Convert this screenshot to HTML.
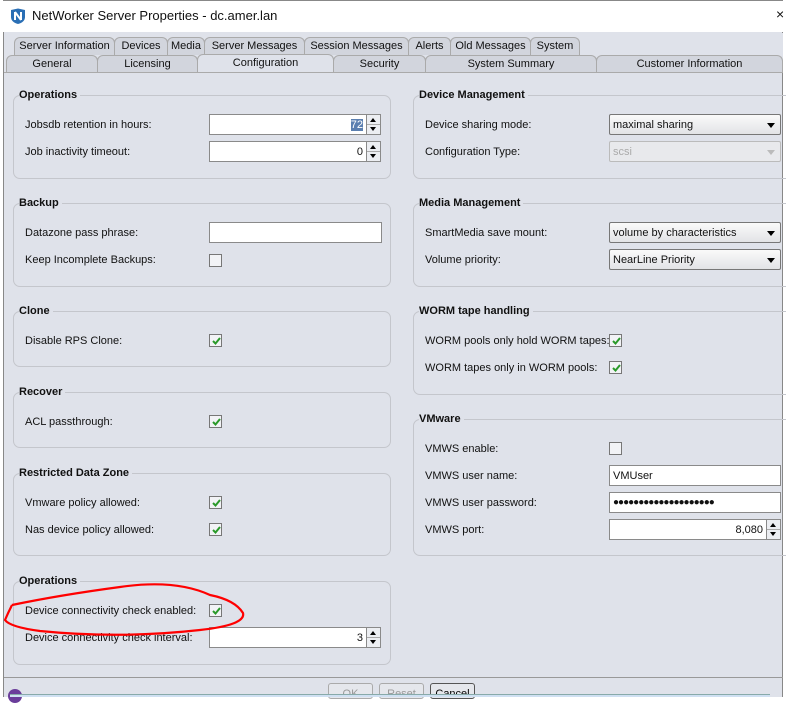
<!DOCTYPE html>
<html><head><meta charset="utf-8"><style>
*{box-sizing:border-box;margin:0;padding:0}
body{width:786px;height:697px;overflow:hidden;background:#fff;font-family:"Liberation Sans",sans-serif;font-size:11px;color:#111;position:relative}
.a{position:absolute}
.win{left:3px;top:0;width:780px;height:697px;background:#dfe2ea;border-left:1px solid #888;border-right:1px solid #888}
.title{left:3px;top:0;width:780px;height:32px;background:#fff;border-top:1px solid #888}
.tab{position:absolute;height:18px;background:#d2d5dd;border:1px solid #aaa;border-bottom:none;border-radius:6px 6px 0 0;text-align:center;line-height:17px;font-size:11px}
.grp{position:absolute;border:1px solid #c4c6cc;border-radius:7px}
.gt{position:absolute;font-weight:bold;font-size:11px;background:#dfe2ea;padding-right:3px}
.lbl{position:absolute;font-size:11px}
.in{position:absolute;height:21px;background:#fff;border:1px solid #8a8a8a;text-align:right;padding-right:3px;line-height:20px}
.sp{position:absolute;width:15px;height:21px;border:1px solid #8a8a8a;background:#eceef2}
.sp:before{content:"";position:absolute;left:3px;top:3px;border:3.5px solid transparent;border-bottom:4px solid #000;border-top:none}
.sp:after{content:"";position:absolute;left:3px;top:12px;border:3.5px solid transparent;border-top:4px solid #000;border-bottom:none}
.sp i{position:absolute;left:0;right:0;top:9px;border-top:1px solid #aaa}
.cb{position:absolute;width:13px;height:13px;border:1px solid #777;background:#f2f3f6}
.ck svg{position:absolute;left:2px;top:2px}
.dd{position:absolute;height:21px;border:1px solid #777;border-radius:2px;background:linear-gradient(#fafafa,#e2e3e6);padding-left:3px;line-height:20px}
.dd:after{content:"";position:absolute;right:5px;top:8px;border:4.5px solid transparent;border-top:5px solid #000;border-bottom:none}
.dis{color:#aaa;border-color:#bbb;background:#e8e9ec}
.dis:after{border-top-color:#bbb}
.btn{position:absolute;top:683px;height:16px;border:1px solid #aaa;border-radius:3px;background:#e5e7ec;text-align:center;color:#999;line-height:20px}
</style></head><body>
<div class="a" style="left:0;top:0;width:3px;height:697px;background:#fff"></div>
<div class="a win"></div>
<div class="a title"></div>
<svg class="a" style="left:10px;top:8px" width="16" height="16" viewBox="0 0 16 16"><path d="M1 2 L8 0.5 L15 2 L15 9 Q15 14 8 16 Q1 14 1 9Z" fill="#2a6fb5"/><path d="M5 4v8M5 4l6 8M11 4v8" stroke="#fff" stroke-width="2" fill="none"/></svg>
<div class="a" style="left:32px;top:8px;font-size:13px">NetWorker Server Properties - dc.amer.lan</div>
<div class="a" style="left:776px;top:6px;font-size:14px">×</div>
<div class="a" style="left:4px;top:33px;width:779px;height:40px;background:#dfe2ea"></div>
<div class="tab" style="left:14px;top:37px;width:101px">Server Information</div>
<div class="tab" style="left:114px;top:37px;width:54px">Devices</div>
<div class="tab" style="left:167px;top:37px;width:38px">Media</div>
<div class="tab" style="left:204px;top:37px;width:101px">Server Messages</div>
<div class="tab" style="left:304px;top:37px;width:105px">Session Messages</div>
<div class="tab" style="left:408px;top:37px;width:43px">Alerts</div>
<div class="tab" style="left:450px;top:37px;width:81px">Old Messages</div>
<div class="tab" style="left:530px;top:37px;width:50px">System</div>
<div class="tab" style="left:6px;top:55px;width:92px">General</div>
<div class="tab" style="left:97px;top:55px;width:101px">Licensing</div>
<div class="tab" style="left:197px;top:54px;width:137px;height:19px;background:#dfe2ea">Configuration</div>
<div class="tab" style="left:333px;top:55px;width:93px">Security</div>
<div class="tab" style="left:425px;top:55px;width:172px">System Summary</div>
<div class="tab" style="left:596px;top:55px;width:187px">Customer Information</div>
<div class="a" style="left:4px;top:72px;width:779px;border-top:1px solid #aaa"></div>

<!-- left column -->
<div class="grp" style="left:13px;top:95px;width:378px;height:84px"></div><div class="gt" style="left:19px;top:89px">Operations</div>
<div class="lbl" style="left:25px;top:119px">Jobsdb retention in hours:</div>
<div class="in" style="left:209px;top:114px;width:158px"><span style="background:#5b7fb0;color:#fff">72</span></div><div class="sp" style="left:366px;top:114px"><i></i></div>
<div class="lbl" style="left:25px;top:146px">Job inactivity timeout:</div>
<div class="in" style="left:209px;top:141px;width:158px">0</div><div class="sp" style="left:366px;top:141px"><i></i></div>

<div class="grp" style="left:13px;top:203px;width:378px;height:84px"></div><div class="gt" style="left:19px;top:197px">Backup</div>
<div class="lbl" style="left:25px;top:227px">Datazone pass phrase:</div>
<div class="in" style="left:209px;top:222px;width:173px"></div>
<div class="lbl" style="left:25px;top:254px">Keep Incomplete Backups:</div>
<div class="cb" style="left:209px;top:254px"></div>

<div class="grp" style="left:13px;top:311px;width:378px;height:56px"></div><div class="gt" style="left:19px;top:305px">Clone</div>
<div class="lbl" style="left:25px;top:335px">Disable RPS Clone:</div>
<div class="cb ck" style="left:209px;top:334px"><svg width="9" height="8" viewBox="0 0 9 8"><path d="M1 4l2.5 2.5L8 1" stroke="#2a9a2a" stroke-width="2" fill="none"/></svg></div>

<div class="grp" style="left:13px;top:392px;width:378px;height:56px"></div><div class="gt" style="left:19px;top:386px">Recover</div>
<div class="lbl" style="left:25px;top:416px">ACL passthrough:</div>
<div class="cb ck" style="left:209px;top:415px"><svg width="9" height="8" viewBox="0 0 9 8"><path d="M1 4l2.5 2.5L8 1" stroke="#2a9a2a" stroke-width="2" fill="none"/></svg></div>

<div class="grp" style="left:13px;top:473px;width:378px;height:83px"></div><div class="gt" style="left:19px;top:467px">Restricted Data Zone</div>
<div class="lbl" style="left:25px;top:497px">Vmware policy allowed:</div>
<div class="cb ck" style="left:209px;top:496px"><svg width="9" height="8" viewBox="0 0 9 8"><path d="M1 4l2.5 2.5L8 1" stroke="#2a9a2a" stroke-width="2" fill="none"/></svg></div>
<div class="lbl" style="left:25px;top:524px">Nas device policy allowed:</div>
<div class="cb ck" style="left:209px;top:523px"><svg width="9" height="8" viewBox="0 0 9 8"><path d="M1 4l2.5 2.5L8 1" stroke="#2a9a2a" stroke-width="2" fill="none"/></svg></div>

<div class="grp" style="left:13px;top:581px;width:378px;height:84px"></div><div class="gt" style="left:19px;top:575px">Operations</div>
<div class="lbl" style="left:25px;top:605px">Device connectivity check enabled:</div>
<div class="cb ck" style="left:209px;top:604px"><svg width="9" height="8" viewBox="0 0 9 8"><path d="M1 4l2.5 2.5L8 1" stroke="#2a9a2a" stroke-width="2" fill="none"/></svg></div>
<div class="lbl" style="left:25px;top:632px">Device connectivity check interval:</div>
<div class="in" style="left:209px;top:627px;width:158px">3</div><div class="sp" style="left:366px;top:627px"><i></i></div>

<!-- right column -->
<div class="grp" style="left:413px;top:95px;width:390px;height:84px"></div><div class="gt" style="left:419px;top:89px">Device Management</div>
<div class="lbl" style="left:425px;top:119px">Device sharing mode:</div>
<div class="dd" style="left:609px;top:114px;width:172px">maximal sharing</div>
<div class="lbl" style="left:425px;top:146px">Configuration Type:</div>
<div class="dd dis" style="left:609px;top:141px;width:172px">scsi</div>

<div class="grp" style="left:413px;top:203px;width:390px;height:84px"></div><div class="gt" style="left:419px;top:197px">Media Management</div>
<div class="lbl" style="left:425px;top:227px">SmartMedia save mount:</div>
<div class="dd" style="left:609px;top:222px;width:172px">volume by characteristics</div>
<div class="lbl" style="left:425px;top:254px">Volume priority:</div>
<div class="dd" style="left:609px;top:249px;width:172px">NearLine Priority</div>

<div class="grp" style="left:413px;top:311px;width:390px;height:84px"></div><div class="gt" style="left:419px;top:305px">WORM tape handling</div>
<div class="lbl" style="left:425px;top:335px">WORM pools only hold WORM tapes:</div>
<div class="cb ck" style="left:609px;top:334px"><svg width="9" height="8" viewBox="0 0 9 8"><path d="M1 4l2.5 2.5L8 1" stroke="#2a9a2a" stroke-width="2" fill="none"/></svg></div>
<div class="lbl" style="left:425px;top:362px">WORM tapes only in WORM pools:</div>
<div class="cb ck" style="left:609px;top:361px"><svg width="9" height="8" viewBox="0 0 9 8"><path d="M1 4l2.5 2.5L8 1" stroke="#2a9a2a" stroke-width="2" fill="none"/></svg></div>

<div class="grp" style="left:413px;top:419px;width:390px;height:137px"></div><div class="gt" style="left:419px;top:413px">VMware</div>
<div class="lbl" style="left:425px;top:443px">VMWS enable:</div>
<div class="cb" style="left:609px;top:442px"></div>
<div class="lbl" style="left:425px;top:470px">VMWS user name:</div>
<div class="in" style="left:609px;top:465px;width:172px;text-align:left;padding-left:3px">VMUser</div>
<div class="lbl" style="left:425px;top:497px">VMWS user password:</div>
<div class="in" style="left:609px;top:492px;width:172px;text-align:left;padding-left:3px;font-size:10px;letter-spacing:-1px">●●●●●●●●●●●●●●●●●●●●</div>
<div class="lbl" style="left:425px;top:524px">VMWS port:</div>
<div class="in" style="left:609px;top:519px;width:158px">8,080</div><div class="sp" style="left:766px;top:519px"><i></i></div>

<div class="a" style="left:4px;top:677px;width:779px;border-top:1px solid #999"></div>
<div class="a" style="left:8px;top:689px;width:14px;height:14px;border-radius:50%;background:#6a3d9a"></div>
<div class="btn" style="left:328px;width:45px">OK</div>
<div class="btn" style="left:379px;width:45px">Reset</div>
<div class="btn" style="left:430px;width:45px;color:#000;border-color:#555">Cancel</div>
<div class="a" style="left:10px;top:694px;width:760px;height:3px;background:#cfe0f2;border-top:1px solid #8aa"></div>

<svg class="a" style="left:0;top:575px" width="260" height="70" viewBox="0 0 260 70"><path d="M12 30 Q60 20 120 12 Q175 4 210 20 Q235 25 243 38 Q246 50 200 55 Q120 64 40 56 Q10 52 5 45 Q8 38 12 30" fill="none" stroke="#f00" stroke-width="2.2"/></svg>
</body></html>
